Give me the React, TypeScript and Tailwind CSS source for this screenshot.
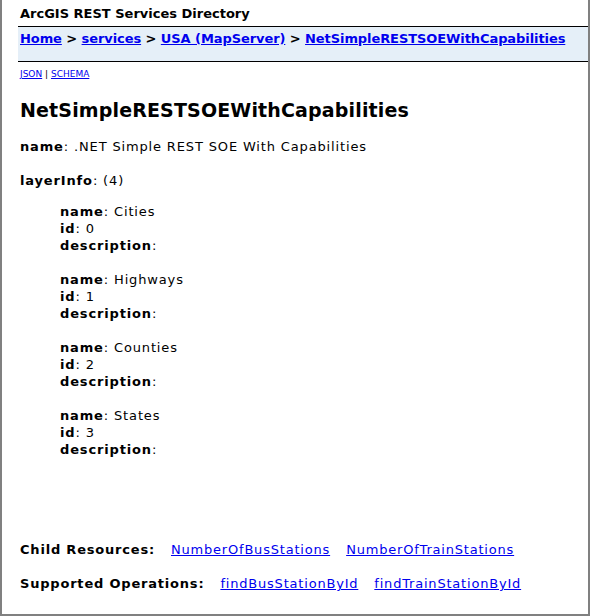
import React from "react";

const link = "text-[#0000ee] underline";

function Layer({ name, id }: { name: string; id: number }) {
  return (
    <div className="leading-[17px] mb-[17px]">
      <div><b>name</b>: {name}</div>
      <div><b>id</b>: {id}</div>
      <div><b>description</b>: </div>
    </div>
  );
}

export default function App() {
  return (
    <div
      className="h-[616px] w-[590px] bg-white border-l-2 border-r-2 border-b-2 border-[#808080] text-[13px] text-black flex flex-col"
      style={{ fontFamily: '"DejaVu Sans", Verdana, sans-serif' }}
    >
      <div className="pl-[16px]">
        <div className="pl-[2px] pt-[6px] h-[26px] font-bold leading-[16px]">ArcGIS REST Services Directory</div>
        <div className="border-t border-b border-black bg-[#e5eff8] h-[36px] pl-[2px] pt-[3px] font-bold leading-[17px] tracking-[-0.08px]">
          <a className={link}>Home</a> &gt; <a className={link}>services</a> &gt;{" "}
          <a className={link}>USA (MapServer)</a> &gt; <a className={link}>NetSimpleRESTSOEWithCapabilities</a>
        </div>
        <div className="pl-[2px] pt-[6px] text-[9px] leading-[12px]">
          <a className={link}>JSON</a> | <a className={link}>SCHEMA</a>
        </div>
        <div className="pl-[2px] pt-[18px] text-[19px] font-bold leading-[24px] tracking-[0.15px]">NetSimpleRESTSOEWithCapabilities</div>
        <div className="tracking-[0.85px]">
          <div className="pl-[2px] pt-[16px] leading-[17px]"><b>name</b>: .NET Simple REST SOE With Capabilities</div>
          <div className="pl-[2px] pt-[17px] leading-[17px]"><b>layerInfo</b>: (4)</div>
          <div className="pl-[42px] pt-[14px]">
            <Layer name="Cities" id={0} />
            <Layer name="Highways" id={1} />
            <Layer name="Counties" id={2} />
            <Layer name="States" id={3} />
          </div>
        </div>
      </div>
      <div className="mt-auto pl-[18px] pb-[22px] leading-[17px] tracking-[0.8px]">
        <div className="flex">
          <b className="mr-[16px]">Child Resources:</b>
          <a className={`${link} mr-[16px]`}>NumberOfBusStations</a>
          <a className={link}>NumberOfTrainStations</a>
        </div>
        <div className="flex mt-[17px]">
          <b className="mr-[16px]">Supported Operations:</b>
          <a className={`${link} mr-[16px]`}>findBusStationById</a>
          <a className={link}>findTrainStationById</a>
        </div>
      </div>
    </div>
  );
}
